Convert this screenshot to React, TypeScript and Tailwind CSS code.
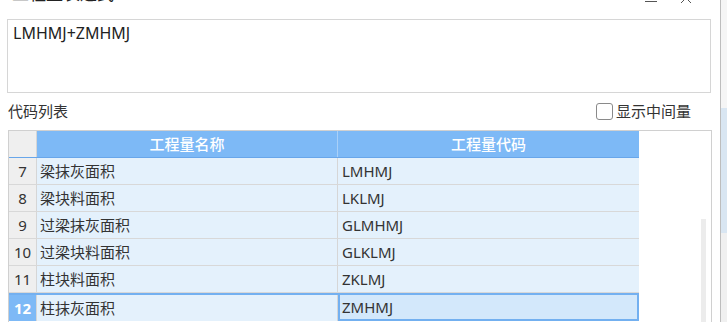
const rows = [
  { no: 7, name: "梁抹灰面积", code: "LMHMJ" },
  { no: 8, name: "梁块料面积", code: "LKLMJ" },
  { no: 9, name: "过梁抹灰面积", code: "GLMHMJ" },
  { no: 10, name: "过梁块料面积", code: "GLKLMJ" },
  { no: 11, name: "柱块料面积", code: "ZKLMJ" },
  { no: 12, name: "柱抹灰面积", code: "ZMHMJ" },
];

const font = { fontFamily: '"Noto Sans", "Noto Sans CJK SC", sans-serif' };

export default function App() {
  return (
    <div className="w-[727px] h-[322px] overflow-hidden bg-white flex text-[#333]" style={font}>
      <div className="w-[712px] flex flex-col">
        {/* title bar, cut off at top */}
        <div className="h-[18px] overflow-hidden flex items-start pl-[12px] pr-[20px]">
          <span className="-mt-[16px] text-[17px] leading-[20px] text-[#222]">工程量表达式</span>
          <div className="ml-auto flex items-start gap-[23px]">
            <div className="mt-[1px] w-[12px] h-[1px] bg-[#555]" />
            <svg className="-mt-[8px] w-[12px] h-[12px]" viewBox="0 0 12 12" fill="none" stroke="#555" strokeWidth="1">
              <path d="M1 1l10 10M11 1L1 11" />
            </svg>
          </div>
        </div>

        {/* expression box */}
        <div className="ml-[7px] mt-[1px] w-[704px] h-[74px] border border-[#d6d6d6] pl-[5px] pt-[3px] text-[16px] leading-[21px] text-[#222]">
          LMHMJ+ZMHMJ
        </div>

        {/* label row */}
        <div className="h-[37px] flex items-center pl-[8px] pr-[21px] text-[15px]">
          <span className="text-[#333]">代码列表</span>
          <label className="ml-auto flex items-center gap-[3px]">
            <span className="w-[17px] h-[17px] border border-[#8a8a8a] rounded-[3px] bg-white" />
            <span className="text-[#333]">显示中间量</span>
          </label>
        </div>

        {/* table */}
        <div className="ml-[8px] w-[704px] flex-1 border-t border-l border-r border-[#d0d0d0] flex">
          <div className="w-[630px] flex flex-col text-[15px]">
            <div className="flex h-[27px] border-b border-[#68a6ea]">
              <div className="w-[28px] bg-[#efefef] border-r border-[#d6d6d6]" />
              <div className="w-[301px] bg-[#7db9f6] border-r border-[#a9d0f8] flex items-center justify-center text-white font-medium">
                工程量名称
              </div>
              <div className="w-[301px] bg-[#7db9f6] flex items-center justify-center text-white font-medium">
                工程量代码
              </div>
            </div>
            {rows.map((r) => {
              const sel = r.no === 12;
              return (
                <div
                  key={r.no}
                  className={
                    sel
                      ? "flex h-[28px] border-t-2 border-[#73b0f0]"
                      : "flex h-[27px] border-b border-[#d8d8d8]"
                  }
                >
                  <div
                    className={
                      sel
                        ? "w-[28px] bg-[#7db9f6] text-white font-bold flex items-center justify-center border-r border-[#d6d6d6]"
                        : "w-[28px] bg-[#efefef] flex items-center justify-center border-r border-[#d6d6d6]"
                    }
                  >
                    {r.no}
                  </div>
                  <div className="w-[301px] bg-[#e4f1fc] border-r border-[#d6d6d6] flex items-center pl-[3px]">
                    {r.name}
                  </div>
                  <div
                    className={
                      sel
                        ? "w-[301px] bg-[#d3e8fb] border-2 border-t-0 border-[#73b0f0] flex items-center pl-[2px]"
                        : "w-[301px] bg-[#e4f1fc] flex items-center pl-[4px]"
                    }
                  >
                    {r.code}
                  </div>
                </div>
              );
            })}
          </div>
          <div className="flex-1 flex justify-end pr-[5px] pt-[88px]">
            <div className="w-[5px] h-full bg-[#ececec]" />
          </div>
        </div>
      </div>

      {/* window behind, at the right edge */}
      <div className="flex-1 flex">
        <div className="w-[8px]" />
        <div className="flex-1 border-l border-[#bdbdbd] flex flex-col">
          <div className="h-[108px] bg-[#f5f5f5]" />
          <div className="h-[125px] bg-[#d9e6f2]" />
          <div className="flex-1 bg-[#f0f0f0]" />
        </div>
      </div>
    </div>
  );
}
